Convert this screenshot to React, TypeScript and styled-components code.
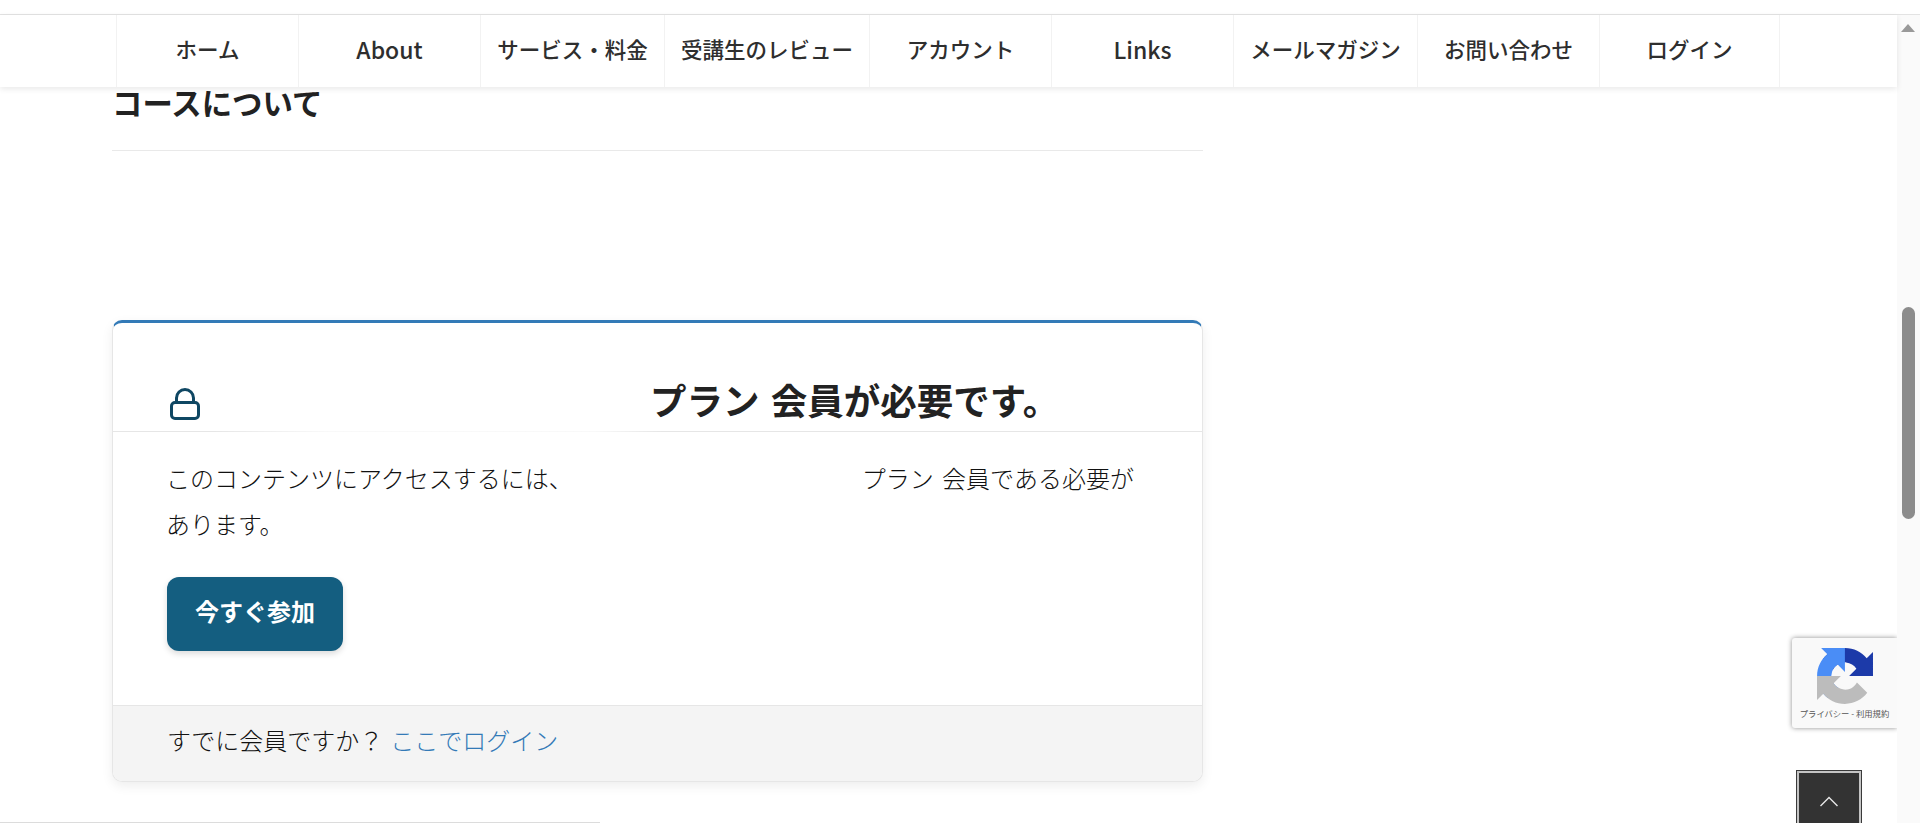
import React from "react";
import styled, { createGlobalStyle } from "styled-components";

const Global = createGlobalStyle`
  html, body { margin: 0; padding: 0; height: 100%; overflow: hidden; background: #fff; }
  body { font-family: "Noto Sans CJK JP", "Liberation Sans", sans-serif; color: #222; }
  * { box-sizing: border-box; }
`;

const Page = styled.div`
  position: relative;
  width: 1920px;
  height: 823px;
  overflow: hidden;
  display: flex;
  flex-direction: column;
`;
const TopStrip = styled.div`
  height: 15px;
  flex: none;
  border-bottom: 1px solid #e3e3e3;
`;
const Body = styled.div`
  flex: 1;
  min-height: 0;
  display: flex;
`;
const Main = styled.main`
  position: relative;
  flex: 1;
  min-width: 0;
  display: flex;
  flex-direction: column;
`;
const NavBar = styled.nav`
  flex: none;
  height: 72px;
  padding-left: 116px;
  display: flex;
  background: #fff;
  box-shadow: 0 2px 6px rgba(0, 0, 0, 0.09);
  position: relative;
  z-index: 2;
`;
const NavItem = styled.a<{ $w: number; $latin?: boolean }>`
  width: ${(p) => p.$w}px;
  flex: none;
  display: flex;
  align-items: center;
  justify-content: center;
  border-left: 1px solid #f2f2f2;
  font-size: ${(p) => (p.$latin ? 23 : 21.5)}px;
  font-weight: 500;
  color: #2e2e2e;
  white-space: nowrap;
  padding-bottom: 5px;
  &:last-child { border-right: 1px solid #f2f2f2; }
`;
const Content = styled.div`
  width: 1091px;
  margin-left: 112px;
`;
const SectionTitle = styled.h2`
  margin: 0;
  height: 64px;
  border-bottom: 1px solid #e9e9e9;
  font-size: 30.4px;
  font-weight: 700;
  line-height: 31px;
  color: #222;
`;
const Card = styled.section`
  margin-top: 169px;
  height: 462px;
  display: flex;
  flex-direction: column;
  background: #fff;
  border: 1px solid #e6e6e6;
  border-top: 3px solid #337ab7;
  border-radius: 10px;
  box-shadow: 0 4px 12px rgba(0, 0, 0, 0.07);
  overflow: hidden;
`;
const CardHead = styled.div`
  position: relative;
  height: 109px;
  flex: none;
  padding: 0 0 8px 57px;
  display: flex;
  align-items: flex-end;
  border-bottom: 1px solid #e6e6e6;
`;
const LockIcon = styled.svg`
  width: 30px;
  height: 32px;
  margin-bottom: 3px;
  flex: none;
  color: #0f4763;
`;
const HeadText = styled.h3`
  margin: 0;
  font-size: 36.5px;
  font-weight: 700;
  line-height: 46px;
  word-spacing: 3px;
  color: #222;
  white-space: nowrap;
`;
const Blank = styled.span<{ $w: number }>`
  display: inline-block;
  width: ${(p) => p.$w}px;
`;
const Smudge = styled.div`
  position: absolute;
  left: 100px;
  bottom: -2px;
  width: 450px;
  height: 5px;
  background: linear-gradient(90deg, rgba(255, 255, 255, 0), rgba(255, 255, 255, 0.75) 25%, rgba(255, 255, 255, 0.75) 85%, rgba(255, 255, 255, 0));
`;
const CardBody = styled.div`
  flex: 1;
  padding: 23px 53px 0;
`;
const Para = styled.p`
  margin: 0;
  font-size: 24px;
  font-weight: 300;
  line-height: 46px;
  word-spacing: 3px;
  color: #111;
`;
const JoinButton = styled.a`
  margin: 30px 0 0 1px;
  width: 176px;
  height: 74px;
  padding-bottom: 8px;
  display: flex;
  align-items: center;
  justify-content: center;
  background: #145e80;
  border-radius: 12px;
  box-shadow: 0 3px 6px rgba(0, 0, 0, 0.14);
  color: #fff;
  font-size: 24px;
  font-weight: 700;
`;
const CardFoot = styled.div`
  height: 76px;
  flex: none;
  padding: 0 0 8px 54px;
  display: flex;
  align-items: center;
  gap: 7px;
  background: #f4f4f4;
  border-top: 1px solid #e6e6e6;
  font-size: 24px;
  font-weight: 300;
  color: #111;
`;
const LoginLink = styled.a`
  color: #337ab7;
`;
const BottomRule = styled.div`
  margin-top: 40px;
  margin-left: -112px;
  width: 600px;
  height: 1px;
  background: #dcdcdc;
`;
const Track = styled.aside`
  position: relative;
  width: 23px;
  flex: none;
  background: #fafafa;
`;
const UpArrow = styled.div`
  margin: 9px 0 0 4px;
  width: 0;
  height: 0;
  border-left: 7.5px solid transparent;
  border-right: 7.5px solid transparent;
  border-bottom: 8px solid #999;
`;
const Thumb = styled.div`
  margin: 275px 0 0 5px;
  width: 13px;
  height: 212px;
  border-radius: 6.5px;
  background: #8c8c8c;
`;
const Badge = styled.div`
  position: absolute;
  left: 1792px;
  top: 623px;
  width: 105px;
  height: 90px;
  padding-top: 10px;
  background: #f9f9f9;
  border-radius: 3px 0 0 3px;
  box-shadow: 0 0 5px rgba(0, 0, 0, 0.45);
  display: flex;
  flex-direction: column;
  align-items: center;
  clip-path: inset(-8px 0 -8px -8px);
`;
const BadgeLogo = styled.svg`
  width: 56px;
  height: 56px;
  flex: none;
`;
const BadgeText = styled.div`
  margin-top: 3px;
  font-size: 8.3px;
  line-height: 12px;
  color: #555;
  white-space: nowrap;
`;
const BackTop = styled.a`
  position: absolute;
  left: 1797px;
  top: 756px;
  width: 64px;
  height: 60px;
  background: #333;
  border: 2px solid #c4c4c4;
  border-bottom: none;
  outline: 1px solid #3a3a3a;
  display: flex;
  justify-content: center;
  padding-top: 23px;
`;

const navItems: [string, number, boolean][] = [
  ["ホーム", 182, false],
  ["About", 182, true],
  ["サービス・料金", 184, false],
  ["受講生のレビュー", 205, false],
  ["アカウント", 182, false],
  ["Links", 182, true],
  ["メールマガジン", 184, false],
  ["お問い合わせ", 182, false],
  ["ログイン", 181, false],
];

export default function App() {
  return (
    <Page>
      <Global />
      <TopStrip />
      <Body>
        <Main>
          <NavBar>
            {navItems.map(([label, w, latin]) => (
              <NavItem key={label} $w={w} $latin={latin}>{label}</NavItem>
            ))}
          </NavBar>
          <Content>
            <SectionTitle>コースについて</SectionTitle>
            <Card>
              <CardHead>
                <LockIcon viewBox="0 0 30 32" fill="none" stroke="currentColor" strokeWidth="3" strokeLinejoin="round">
                  <rect x="1.5" y="14.5" width="27" height="16" rx="3.5" />
                  <path d="M6.5 14.5V10a8.5 8.5 0 0 1 17 0v4.5" />
                </LockIcon>
                <HeadText>
                  <Blank $w={450} />プラン 会員が必要です。
                </HeadText>
                <Smudge />
              </CardHead>
              <CardBody>
                <Para>
                  このコンテンツにアクセスするには、<Blank $w={289} />プラン 会員である必要があります。
                </Para>
                <JoinButton>今すぐ参加</JoinButton>
              </CardBody>
              <CardFoot>
                <span>すでに会員ですか？</span>
                <LoginLink>ここでログイン</LoginLink>
              </CardFoot>
            </Card>
            <BottomRule />
          </Content>
          <Badge>
            <BadgeLogo viewBox="0 0 64 64">
              <path d="M64 31.955l-.033-1.37V4.687l-7.16 7.16C50.948 4.674 42.033.093 32.05.093c-10.4 0-19.622 4.96-25.458 12.64l11.736 11.86a15.55 15.55 0 0 1 4.754-5.333c2.05-1.6 4.952-2.906 8.968-2.906.485 0 .86.057 1.135.163 4.976.393 9.288 3.14 11.828 7.124l-8.307 8.307c10.522-.04 22.408-.066 27.295.005" fill="#1c3aa9" />
              <path d="M31.955.002l-1.37.033H4.687l7.16 7.16C4.674 13.053.093 21.97.093 31.95c0 10.4 4.96 19.622 12.64 25.458l11.86-11.736a15.55 15.55 0 0 1-5.333-4.754c-1.6-2.05-2.906-4.952-2.906-8.968 0-.485.057-.86.163-1.135.393-4.976 3.14-9.288 7.124-11.828l8.307 8.307c-.04-10.522-.066-22.408.005-27.295" fill="#4a8df6" />
              <path d="M.002 32.045l.033 1.37v25.898l7.16-7.16c5.857 7.173 14.772 11.754 24.756 11.754 10.4 0 19.622-4.96 25.458-12.64L45.673 39.407a15.55 15.55 0 0 1-4.754 5.333c-2.05 1.6-4.952 2.906-8.968 2.906-.485 0-.86-.057-1.135-.163-4.976-.393-9.288-3.14-11.828-7.124l8.307-8.307c-10.522.04-22.408.066-27.295-.005" fill="#bcbcbc" />
            </BadgeLogo>
            <BadgeText>プライバシー - 利用規約</BadgeText>
          </Badge>
          <BackTop>
            <svg width="20" height="11" viewBox="0 0 20 11" fill="none" stroke="#e8e8e8" strokeWidth="1.4">
              <path d="M1.5 10 10 1.5 18.5 10" />
            </svg>
          </BackTop>
        </Main>
        <Track>
          <UpArrow />
          <Thumb />
        </Track>
      </Body>
    </Page>
  );
}
